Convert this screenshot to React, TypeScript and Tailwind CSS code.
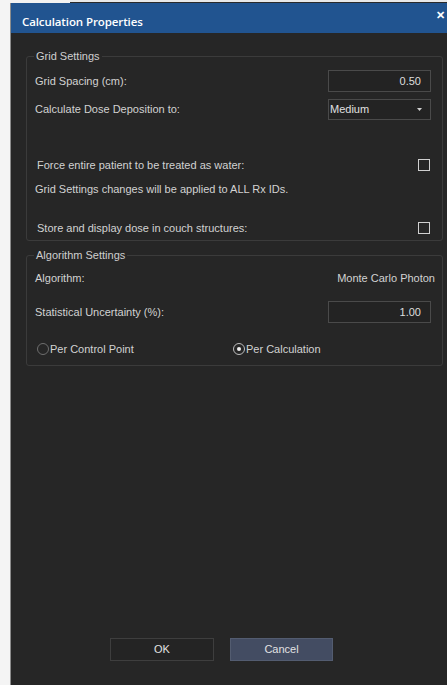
const label = "text-[11px] leading-none text-[#d2d2d2]";

function NumberBox({ value }: { value: string }) {
  return (
    <div className="flex h-[22px] w-[103px] items-center justify-end border border-[#4a4a4a] bg-[#232323] pr-[9px] text-[11px] text-[#dedede]">
      {value}
    </div>
  );
}

function CheckBox() {
  return <div className="h-[12px] w-[12px] border border-[#d0d0d0]" />;
}

function Radio({ checked, text }: { checked?: boolean; text: string }) {
  return (
    <div className="flex items-center gap-[1px]">
      <div
        className={
          "flex h-[12px] w-[12px] items-center justify-center rounded-full border " +
          (checked ? "border-[#bdbdbd]" : "border-[#6e6e6e]")
        }
      >
        {checked && <div className="h-[4px] w-[4px] rounded-full bg-[#f0f0f0]" />}
      </div>
      <span className={label}>{text}</span>
    </div>
  );
}

function Group({ title, children }: { title: string; children: React.ReactNode }) {
  return (
    <fieldset className="rounded-[3px] border border-[#3b3b3b] pl-[8px] pr-[11px]">
      <legend className="-ml-[1px] px-[2px] text-[11px] leading-[14px] text-[#cfcfcf]">{title}</legend>
      {children}
    </fieldset>
  );
}

export default function App() {
  return (
    <div
      className="flex h-[685px] w-[447px] overflow-hidden bg-white"
      style={{ fontFamily: '"Liberation Sans", Arial, sans-serif' }}
    >
      <div className="w-[10px] shrink-0 bg-[#f4f4f4]" />
      <div className="flex min-w-0 flex-1 flex-col">
        {/* strip of the window behind */}
        <div className="flex h-[3px] shrink-0">
          <div className="w-[60px] bg-[#f2f2f2]" />
          <div className="flex-1 border-b border-[#2a2a2a] bg-[#e8e8e8]" />
        </div>

        <div className="flex flex-1 flex-col border-l border-[#8c8c8c] bg-[#262626]">
          <div className="flex h-[30px] shrink-0 items-start justify-between bg-[#215490] pl-[11px] pr-[2px]">
            <span
              className="mt-[11px] text-[11.5px] font-semibold leading-[16px] tracking-[-0.1px] text-white"
              style={{ fontFamily: '"Open Sans", sans-serif' }}
            >
              Calculation Properties
            </span>
            <span className="mt-[7px] text-[11px] font-bold leading-none text-white">✕</span>
          </div>

          <div className="flex flex-1 flex-col pl-[15px] pr-[4px] pt-[16px]">
            <Group title="Grid Settings">
              <div className="mt-[7px] flex h-[22px] items-center justify-between">
                <span className={label}>Grid Spacing (cm):</span>
                <NumberBox value="0.50" />
              </div>
              <div className="mt-[7px] flex h-[21px] items-center justify-between">
                <span className={label}>Calculate Dose Deposition to:</span>
                <div className="flex h-[21px] w-[103px] items-center justify-between border border-[#4a4a4a] bg-[#232323] pl-[1px] pr-[8px] text-[11px] text-[#e0e0e0]">
                  Medium
                  <svg width="5" height="3" viewBox="0 0 5 3">
                    <path d="M0 0 L5 0 L2.5 3 Z" fill="#d0d0d0" />
                  </svg>
                </div>
              </div>
              <div className="mt-[35px] flex h-[20px] items-center justify-between pl-[2px] pr-[1px]">
                <span className={label}>Force entire patient to be treated as water:</span>
                <CheckBox />
              </div>
              <div className="mt-[6px] flex h-[16px] items-center">
                <span className={label}>Grid Settings changes will be applied to ALL Rx IDs.</span>
              </div>
              <div className="mb-[2px] mt-[21px] flex h-[20px] items-center justify-between pl-[2px] pr-[1px]">
                <span className={label}>Store and display dose in couch structures:</span>
                <CheckBox />
              </div>
            </Group>

            <div className="mt-[7px]">
              <Group title="Algorithm Settings">
                <div className="mt-[6px] flex h-[20px] items-center justify-between">
                  <span className={label}>Algorithm:</span>
                  <span className={label + " -mr-[4px]"}>Monte Carlo Photon</span>
                </div>
                <div className="mt-[13px] flex h-[22px] items-center justify-between">
                  <span className={label}>Statistical Uncertainty (%):</span>
                  <NumberBox value="1.00" />
                </div>
                <div className="mb-[8px] mt-[18px] flex h-[16px] items-center pl-[2px]">
                  <div className="w-[196px]">
                    <Radio text="Per Control Point" />
                  </div>
                  <Radio checked text="Per Calculation" />
                </div>
              </Group>
            </div>

            <div className="flex-1" />

            <div className="mb-[24px] flex gap-[16px] pl-[84px]">
              <button className="h-[23px] w-[104px] border border-[#3e3e3e] bg-[#242424] text-[11px] text-[#e2e2e2]">
                OK
              </button>
              <button className="h-[23px] w-[103px] border border-[#535c70] bg-[#434c62] text-[11px] text-[#e2e2e2]">
                Cancel
              </button>
            </div>
          </div>
        </div>
      </div>
    </div>
  );
}
